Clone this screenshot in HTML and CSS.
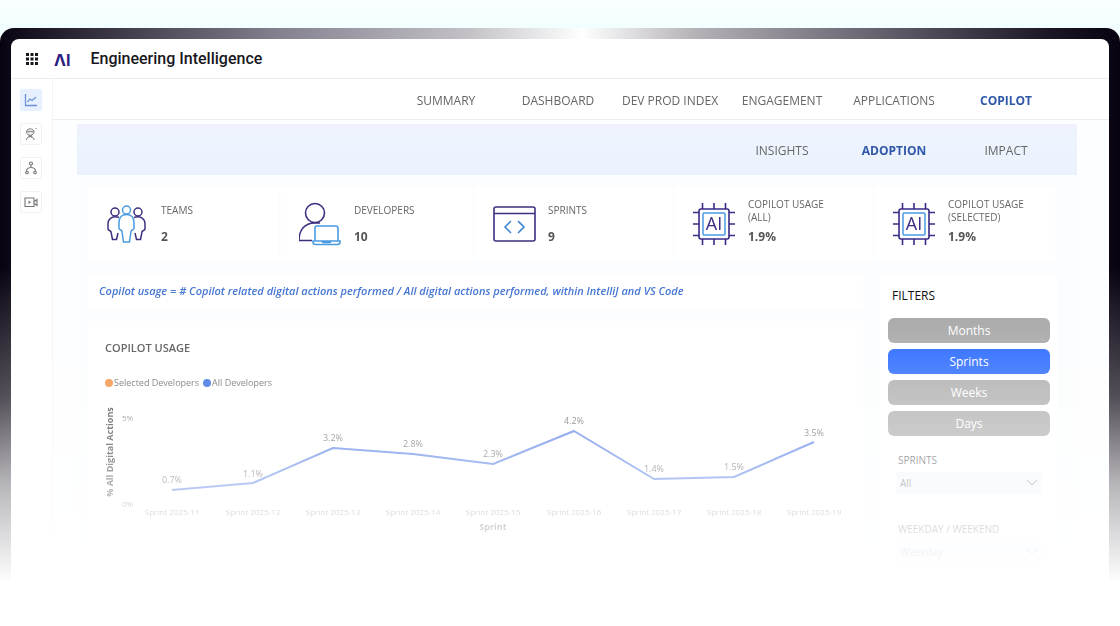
FILE: index.html
```html
<!DOCTYPE html>
<html lang="en">
<head>
<meta charset="utf-8">
<meta name="viewport" content="width=device-width, initial-scale=1">
<title>Engineering Intelligence</title>
<link rel="stylesheet" href="styles.css">
</head>
<body>
<svg class="defs" aria-hidden="true">
  <symbol id="chip" viewBox="0 0 44 44">
    <g fill="none" stroke="#3b2a86" stroke-width="1.6">
      <rect x="6" y="7" width="30" height="30" rx="2"/>
      <path d="M9.500 7V1M21 7V1M32.500 7V1M9.500 43V37M21 43V37M32.500 43V37M6 10.500H0M6 22H0M6 33.500H0M42 10.500H36M42 22H36M42 33.500H36"/>
    </g>
    <rect x="10" y="11" width="22" height="22" rx="1" fill="none" stroke="#4a9be0" stroke-width="1.500"/>
  </symbol>
</svg>
<div class="frame">
  <div class="app">
    <header class="topbar">
      <button class="launcher" aria-label="Apps">
        <svg width="12" height="12" viewBox="0 0 12 12" fill="#17171c"><path d="M0 0h3v3H0zM4.500 0h3v3h-3zM9 0h3v3H9zM0 4.500h3v3H0zM4.500 4.500h3v3h-3zM9 4.500h3v3H9zM0 9h3v3H0zM4.500 9h3v3h-3zM9 9h3v3H9z"/></svg>
      </button>
      <span class="logo">ΛI</span>
      <h1 class="title">Engineering Intelligence</h1>
    </header>
    <div class="workspace">
      <aside class="sidebar">
        <button class="side-btn active" aria-label="Analytics">
          <svg width="14" height="14" viewBox="0 0 14 14" fill="none" stroke="#6c93d6" stroke-width="1.300"><path d="M1.500 1v11.500H13"/><path d="M3.500 9l2.500-3 2 1.500L12 4" stroke-width="1.200"/></svg>
        </button>
        <button class="side-btn" aria-label="Assistant">
          <svg width="14" height="14" viewBox="0 0 14 14" fill="none" stroke="#77777a"><path d="M2.500 4.500C2.500 1 10 1 10 4.500c0 5-7.500 5-7.500 0zM3 4.300h6.500M4.500 5.800h1M7.500 5.800h1M2.500 13c.3-2.500 1.800-3.500 3.800-3.500s3.500 1 3.800 3.500M4.500 8l3.500 2.500M8 8l-3.500 2.500M11.500 2l1-1"/></svg>
        </button>
        <button class="side-btn" aria-label="Workflow">
          <svg width="14" height="14" viewBox="0 0 14 14" fill="none" stroke="#77777a" stroke-width="1.100"><circle cx="7" cy="2.500" r="1.500"/><circle cx="3" cy="11.500" r="1.300"/><circle cx="11" cy="11.500" r="1.300"/><path d="M7 4v2.500M2.500 10c0-2 2-3.500 4.500-3.500s4.500 1.500 4.500 3.500"/></svg>
        </button>
        <button class="side-btn" aria-label="Recordings">
          <svg width="14" height="14" viewBox="0 0 14 14" fill="none" stroke="#77777a" stroke-width="1.100"><path d="M1 3h9v8.500H1zM10.500 6.500l2.500-2v6l-2.500-2"/><path d="M4.500 5.500v3.500l2.500-1.800z" fill="#77777a" stroke="none"/></svg>
        </button>
      </aside>
      <main class="main">
        <nav class="tabs" aria-label="Sections">
          <a href="#">SUMMARY</a><a href="#">DASHBOARD</a><a href="#">DEV PROD INDEX</a><a href="#">ENGAGEMENT</a><a href="#">APPLICATIONS</a><a href="#" class="current">COPILOT</a>
        </nav>
        <div class="page">
          <nav class="subtabs" aria-label="Copilot views">
            <a href="#">INSIGHTS</a><a href="#" class="current">ADOPTION</a><a href="#">IMPACT</a>
          </nav>
          <div class="board">
            <section class="stats">
              <div class="stat">
                <svg width="44" height="44" viewBox="0 0 44 44" fill="none" stroke="#3f2f80" stroke-width="1.500"><circle cx="9" cy="10" r="4"/><circle cx="32" cy="10" r="4"/><path d="M13 15.500c-6-2-11 1-11 6.500v5c0 1.500 3 1.500 3 3l1.500 7.500h4L12 31M28 15.500c6-2 11 1 11 6.500v5c0 1.500-3 1.500-3 3l-1.500 7.500h-4L29 31"/><g stroke="#4a9be0"><circle cx="20.500" cy="8" r="4"/><path d="M20.500 12.500c-4.500 0-7.500 3-7.500 8v6c0 1.500 3 1 3 3l1.500 10.500h6L25 29.500c0-2 3-1.500 3-3v-6c0-5-3-8-7.500-8z"/></g></svg>
                <div class="stat-text"><h2>TEAMS</h2><p>2</p></div>
              </div>
              <div class="stat">
                <svg width="44" height="44" viewBox="0 0 44 44" fill="none" stroke="#3f2f80" stroke-width="1.600"><circle cx="16" cy="11" r="9.500"/><path d="M13 38.500H0c0-10 5-17.500 16-17.500h5"/><g stroke="#4a9be0"><path d="M16 39V26q0-2 2-2h19q2 0 2 2v13"/><path d="M14 39h27v1q0 2.500-2.500 2.500h-22Q14 42.500 14 40zM23 39l1 1.500h7l1-1.500"/></g></svg>
                <div class="stat-text"><h2>DEVELOPERS</h2><p>10</p></div>
              </div>
              <div class="stat">
                <svg width="44" height="44" viewBox="0 0 44 44" fill="none" stroke="#3f2f80" stroke-width="1.600"><rect x="1" y="5" width="41" height="34" rx="2"/><path d="M1 11.500h41"/><path d="M18 19l-6 6 6 6M25 19l6 6-6 6" stroke="#3d87d4"/></svg>
                <div class="stat-text"><h2>SPRINTS</h2><p>9</p></div>
              </div>
              <div class="stat">
                <svg width="44" height="44" viewBox="0 0 44 44"><use href="#chip"/><text x="21" y="28" text-anchor="middle" class="chip-text">AI</text></svg>
                <div class="stat-text"><h2>COPILOT USAGE<br>(ALL)</h2><p>1.9%</p></div>
              </div>
              <div class="stat">
                <svg width="44" height="44" viewBox="0 0 44 44"><use href="#chip"/><text x="21" y="28" text-anchor="middle" class="chip-text">AI</text></svg>
                <div class="stat-text"><h2>COPILOT USAGE<br>(SELECTED)</h2><p>1.9%</p></div>
              </div>
            </section>
            <div class="columns">
              <div class="left">
                <p class="note">Copilot usage = # Copilot related digital actions performed / All digital actions performed, within IntelliJ and VS Code</p>
                <section class="chart-card">
                  <h2>COPILOT USAGE</h2>
                  <div class="legend"><span class="dot orange"></span>Selected Developers<span class="dot blue"></span>All Developers</div>
                  <svg class="chart" viewBox="0 0 741 140" role="img" aria-label="Copilot usage by sprint">
                    <text class="axis-title" text-anchor="middle" transform="translate(8 52) rotate(-90)">% All Digital Actions</text>
                    <g class="ticks"><text x="17" y="21">5%</text><text x="17" y="107">0%</text></g>
                    <polyline points="67,90 148,83 228,48 308,54 388,64 469,31 549,79 629,77 709,42" fill="none" stroke="#3f6ee0" stroke-width="2" stroke-linejoin="round"/>
                    <g class="values" text-anchor="middle"><text x="67" y="83">0.7%</text><text x="148" y="77">1.1%</text><text x="228" y="41">3.2%</text><text x="308" y="47">2.8%</text><text x="388" y="57">2.3%</text><text x="469" y="24">4.2%</text><text x="549" y="72">1.4%</text><text x="629" y="70">1.5%</text><text x="709" y="36">3.5%</text></g>
                    <g class="ticks" text-anchor="middle"><text x="67" y="115">Sprint 2025-11</text><text x="148" y="115">Sprint 2025-12</text><text x="228" y="115">Sprint 2025-13</text><text x="308" y="115">Sprint 2025-14</text><text x="388" y="115">Sprint 2025-15</text><text x="469" y="115">Sprint 2025-16</text><text x="549" y="115">Sprint 2025-17</text><text x="629" y="115">Sprint 2025-18</text><text x="709" y="115">Sprint 2025-19</text></g>
                    <text class="axis-title" x="388" y="130" text-anchor="middle">Sprint</text>
                  </svg>
                </section>
              </div>
              <section class="filters">
                <h2>FILTERS</h2>
                <div class="periods">
                  <button>Months</button><button class="selected">Sprints</button><button>Weeks</button><button>Days</button>
                </div>
                <div class="field">
                  <label for="sprints">SPRINTS</label>
                  <div class="select"><select id="sprints"><option>All</option></select><svg width="12" height="12" viewBox="0 0 12 12" fill="none" stroke="#777"><path d="M1 3l5 5 5-5"/></svg></div>
                </div>
                <div class="field">
                  <label for="days">WEEKDAY / WEEKEND</label>
                  <div class="select"><select id="days"><option>Weekday</option></select><svg width="12" height="12" viewBox="0 0 12 12" fill="none" stroke="#777"><path d="M1 3l5 5 5-5"/></svg></div>
                </div>
              </section>
            </div>
          </div>
        </div>
      </main>
    </div>
  </div>
</div>
</body>
</html>
```
FILE: styles.css
```css
* { box-sizing: border-box; }
body {
  margin: 0;
  min-height: 100vh;
  padding-top: 28px;
  background: linear-gradient(#fafffe, #f0fffe 28px, #fff 60px);
  font-family: "Open Sans", "Noto Sans", sans-serif;
  color: #555;
}
h1, h2, p { margin: 0; }
button { border: 0; padding: 0; font-family: inherit; }
a { color: inherit; text-decoration: none; }
.defs { position: absolute; width: 0; height: 0; }
.chip-text { font-size: 18px; fill: #3b2a86; }

.frame {
  min-height: calc(100vh - 28px);
  padding: 11px 11px 0;
  border-radius: 14px 14px 0 0;
  background:
    linear-gradient(rgba(255, 255, 255, 0) 240px, rgba(255, 255, 255, 0.3) 370px, rgba(255, 255, 255, 0.7) 455px, #fff 555px),
    linear-gradient(to right, #080310, #1a1422 3%, #858190 25%, #c4c2c7 42%, #fff 52%, #b5b2b8 62%, #6c6874 77%, #1a1424 94%, #080310);
}
.app {
  border-radius: 8px 8px 0 0;
  background: #fff;
  overflow: hidden;
}
.topbar {
  display: flex;
  align-items: center;
  height: 40px;
  padding-left: 15px;
  border-bottom: 1px solid #ededee;
}
.launcher { display: flex; background: none; }
.logo {
  margin-left: 16px;
  padding-top: 2px;
  font: 700 16px/20px Inter, sans-serif;
  color: #2c2080;
}
.title {
  margin-left: 20px;
  font: 500 16px/20px Roboto, sans-serif;
  color: #17171c;
}
.workspace {
  display: flex;
  -webkit-mask-image: linear-gradient(#000 180px, rgba(0, 0, 0, 0.88) 250px, rgba(0, 0, 0, 0.65) 320px, rgba(0, 0, 0, 0.52) 370px, rgba(0, 0, 0, 0.28) 430px, rgba(0, 0, 0, 0.08) 475px, transparent 500px);
  mask-image: linear-gradient(#000 180px, rgba(0, 0, 0, 0.88) 250px, rgba(0, 0, 0, 0.65) 320px, rgba(0, 0, 0, 0.52) 370px, rgba(0, 0, 0, 0.28) 430px, rgba(0, 0, 0, 0.08) 475px, transparent 500px);
}
.sidebar {
  display: flex;
  flex-direction: column;
  gap: 12px;
  width: 42px;
  padding: 10px 0 0 9px;
  border-right: 1px solid #f3f4f6;
}
.side-btn {
  display: grid;
  place-items: center;
  width: 22px;
  height: 22px;
  border: 1px solid #f1f1f3;
  border-radius: 2px;
  background: #fff;
}
.side-btn.active { background: #e6f0fe; border-color: #e6f0fe; }
.main { flex: 1; min-width: 0; }
.tabs, .subtabs {
  display: flex;
  justify-content: flex-end;
  align-items: center;
  font-size: 12px;
  line-height: 16px;
  color: #666;
}
.tabs { height: 41px; padding: 3px 47px 0 0; border-bottom: 1px solid #eceeed; }
.tabs a, .subtabs a { width: 112px; text-align: center; white-space: nowrap; }
.tabs .current, .subtabs .current { font-weight: 700; color: #3058a8; }
.page { padding: 4px 32px 0 24px; background: #fdfeff; }
.subtabs {
  height: 51px;
  padding: 2px 15px 0 0;
  background: linear-gradient(#f0f1fd, #edf4fe 30%, #ecf2fd);
}
.board { padding: 12px 19px 30px 11px; background: #fbfdfe; }
.stats {
  display: grid;
  grid-template-columns: 193fr 194fr 200fr 200fr 183fr;
}
.stat {
  display: flex;
  align-items: center;
  gap: 11px;
  height: 73px;
  padding-left: 18px;
  background: #fff;
  border-right: 3px solid #fbfdfe;
}
.stat svg { flex: none; }
.stat-text { margin-bottom: 5px; }
.stat h2 {
  display: grid;
  align-items: center;
  min-height: 26px;
  font-size: 10px;
  font-weight: 400;
  line-height: 13px;
  color: #666;
}
.stat p { margin-top: 5px; font-size: 12px; font-weight: 700; line-height: 16px; }
.columns {
  display: grid;
  grid-template-columns: 775fr 178fr;
  gap: 17px;
  padding-top: 15px;
}
.note {
  padding: 7px 11px 9px;
  background: #fff;
  font-size: 11px;
  font-weight: 600;
  font-style: italic;
  line-height: 18px;
  color: #3a6ed0;
}
.chart-card { margin-top: 12px; padding: 18px 17px 0; background: #fff; }
.chart-card h2 { font-size: 11px; font-weight: 600; line-height: 18px; color: #444; }
.legend {
  display: flex;
  align-items: center;
  margin-top: 18px;
  font-size: 9px;
  line-height: 16px;
  color: #555;
}
.dot { width: 8px; height: 8px; margin-right: 1px; border-radius: 50%; }
.orange { background: #f5802a; }
.blue { margin-left: 4px; background: #1c5cde; }
.chart { display: block; width: 100%; margin-top: 9px; overflow: visible; }
.ticks { font-size: 8px; fill: #777; }
.values { font-size: 9px; fill: #555; }
.axis-title { font-size: 9px; font-weight: 700; fill: #222; }

.filters { padding: 12px 8px; background: #fff; }
.filters h2 { padding-left: 4px; font-size: 12px; font-weight: 400; line-height: 18px; color: #000; }
.periods { display: grid; gap: 6px; margin-top: 13px; }
.periods button {
  height: 25px;
  border-radius: 6px;
  background: #a2a2a2;
  color: #fff;
  font-size: 12px;
}
.periods .selected { background: #1259ff; }
.field { padding: 0 8px; margin-top: 16px; }
.field + .field { margin-top: 27px; }
.field label { display: block; padding-left: 2px; font-size: 10px; line-height: 16px; color: #444; }
.select { display: grid; align-items: center; margin-top: 4px; background: #eff4fc; }
.select select {
  grid-area: 1 / 1;
  width: 100%;
  height: 22px;
  padding: 0 4px;
  border: 0;
  background: none;
  appearance: none;
  font: 10px "Open Sans", sans-serif;
  color: #666;
}
.select svg { grid-area: 1 / 1; justify-self: end; margin-right: 4px; pointer-events: none; }
```
